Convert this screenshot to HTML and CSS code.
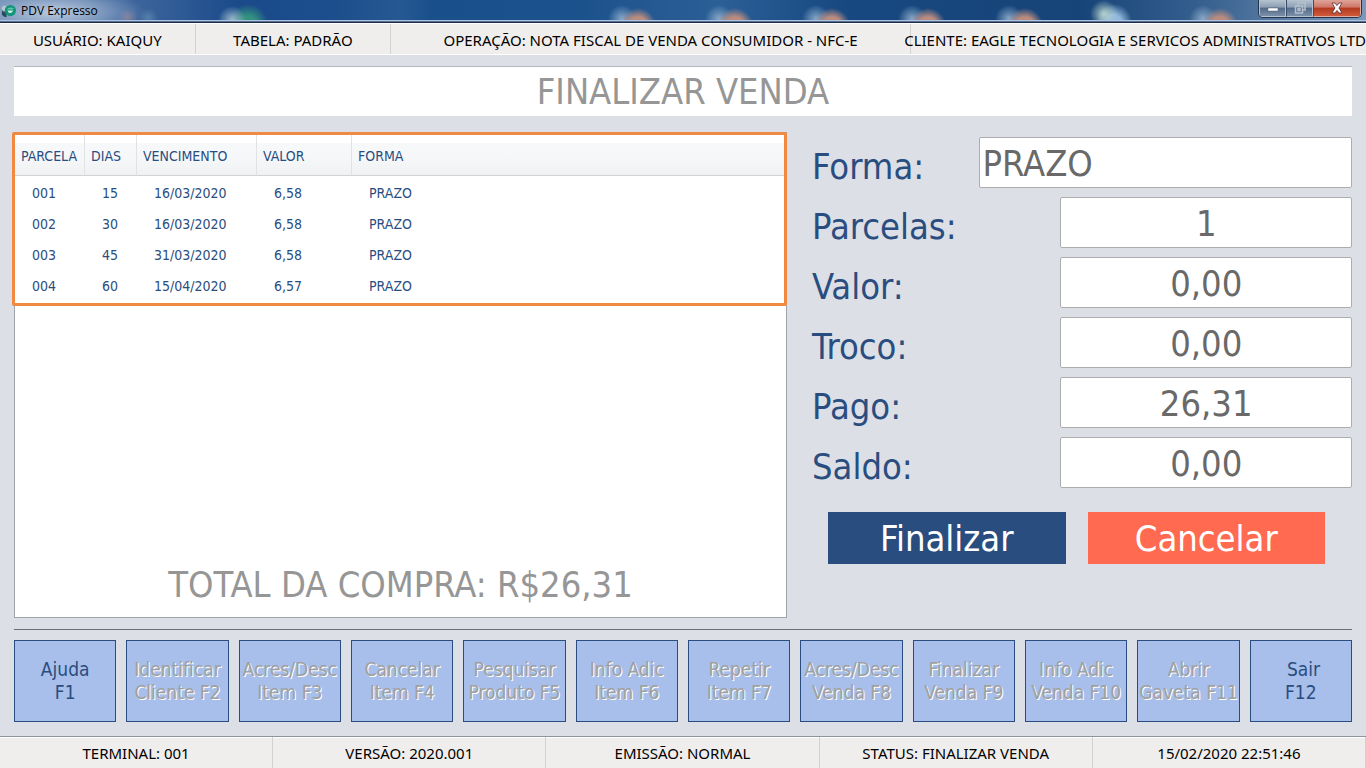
FILE: index.html
```html
<!DOCTYPE html>
<html lang="pt-BR">
<head>
    <meta charset="UTF-8">
    <title>PDV Expresso</title>
    <link rel="stylesheet" href="styles.css">
</head>
<body>

<header class="titlebar">
    <svg class="app-icon" viewBox="0 0 16 16" aria-hidden="true">
        <path d="M1 7 Q3 4 6 5 V15 Q2 15 1 12 Z" fill="#2c4a5c"/>
        <circle cx="4" cy="6" r="3" fill="#b8c8cf"/>
        <circle cx="10" cy="8" r="6" fill="#14947a"/>
        <path d="M6 7 Q9 3 14 6 L12 7 Z" fill="#5fc4a8"/>
        <path d="M7 8 H13 Q11 12 8 10 Z" fill="#c5efe2"/>
    </svg>
    <span class="app-name">PDV Expresso</span>
    <div class="window-buttons">
        <button class="win-btn" aria-label="Minimizar">
            <svg width="12" height="12" viewBox="0 0 12 12"><rect x="1" y="6" width="10" height="3" fill="#fff" stroke="#53606f" stroke-width=".5"/></svg>
        </button>
        <button class="win-btn" aria-label="Restaurar" disabled>
            <svg width="12" height="12" viewBox="0 0 12 12" fill="none" stroke="#b4c0cc" stroke-width="1.5"><path d="M4 3 V1 H11 V8 H9"/><rect x="1.5" y="4" width="7" height="7"/><rect x="4" y="6.5" width="2" height="2"/></svg>
        </button>
        <button class="win-btn win-close" aria-label="Fechar">
            <svg width="14" height="12" viewBox="0 0 14 12"><path d="M2 1 H5 L7 3.5 L9 1 H12 L9 6 L12 11 H9 L7 8.5 L5 11 H2 L5 6 Z" fill="#fff" stroke="#5b2c30" stroke-width=".8"/></svg>
        </button>
    </div>
</header>

<div class="statusbar statusbar-top">
    <div class="cell user">USUÁRIO: KAIQUY</div>
    <div class="cell price-table">TABELA: PADRÃO</div>
    <div class="cell operation">OPERAÇÃO: NOTA FISCAL DE VENDA CONSUMIDOR - NFC-E</div>
    <div class="cell client">CLIENTE: EAGLE TECNOLOGIA E SERVICOS ADMINISTRATIVOS LTD</div>
</div>

<main>
    <h1>FINALIZAR VENDA</h1>

    <div class="content">
        <section class="installments">
            <div class="table-box">
                <table>
                    <thead>
                        <tr>
                            <th class="col-parcela">PARCELA</th>
                            <th class="col-dias">DIAS</th>
                            <th class="col-vencimento">VENCIMENTO</th>
                            <th class="col-valor">VALOR</th>
                            <th>FORMA</th>
                        </tr>
                    </thead>
                    <tbody>
                        <tr><td>001</td><td>15</td><td>16/03/2020</td><td>6,58</td><td>PRAZO</td></tr>
                        <tr><td>002</td><td>30</td><td>16/03/2020</td><td>6,58</td><td>PRAZO</td></tr>
                        <tr><td>003</td><td>45</td><td>31/03/2020</td><td>6,58</td><td>PRAZO</td></tr>
                        <tr><td>004</td><td>60</td><td>15/04/2020</td><td>6,57</td><td>PRAZO</td></tr>
                    </tbody>
                </table>
            </div>
            <p class="total">TOTAL DA COMPRA: R$26,31</p>
        </section>

        <form class="payment">
            <div class="field field-wide">
                <label for="forma">Forma:</label>
                <input type="text" id="forma" value="PRAZO">
            </div>
            <div class="field">
                <label for="parcelas">Parcelas:</label>
                <input type="text" id="parcelas" value="1">
            </div>
            <div class="field">
                <label for="valor">Valor:</label>
                <input type="text" id="valor" value="0,00">
            </div>
            <div class="field">
                <label for="troco">Troco:</label>
                <input type="text" id="troco" value="0,00">
            </div>
            <div class="field">
                <label for="pago">Pago:</label>
                <input type="text" id="pago" value="26,31">
            </div>
            <div class="field">
                <label for="saldo">Saldo:</label>
                <input type="text" id="saldo" value="0,00">
            </div>
            <div class="actions">
                <button type="button" class="btn-finish">Finalizar</button>
                <button type="button" class="btn-cancel">Cancelar</button>
            </div>
        </form>
    </div>

    <nav class="shortcuts">
        <button>Ajuda<br>F1</button>
        <button disabled>Identificar<br>Cliente F2</button>
        <button disabled>Acres/Desc<br>Item F3</button>
        <button disabled>Cancelar<br>Item F4</button>
        <button disabled>Pesquisar<br>Produto F5</button>
        <button disabled>Info Adic<br>Item F6</button>
        <button disabled>Repetir<br>Item F7</button>
        <button disabled>Acres/Desc<br>Venda F8</button>
        <button disabled>Finalizar<br>Venda F9</button>
        <button disabled>Info Adic<br>Venda F10</button>
        <button disabled>Abrir<br>Gaveta F11</button>
        <button>&nbsp;Sair<br>F12</button>
    </nav>
</main>

<footer class="statusbar statusbar-bottom">
    <div class="cell">TERMINAL: 001</div>
    <div class="cell">VERSÃO: 2020.001</div>
    <div class="cell">EMISSÃO: NORMAL</div>
    <div class="cell">STATUS: FINALIZAR VENDA</div>
    <div class="cell">15/02/2020 22:51:46</div>
</footer>

</body>
</html>
```

FILE: styles.css
```css
* {
    box-sizing: border-box;
}
body {
    margin: 0;
    min-height: 100vh;
    display: flex;
    flex-direction: column;
    background: #dcdfe6;
    font-family: Tahoma, "DejaVu Sans Condensed", "DejaVu Sans", sans-serif;
    color: #2a4d7f;
    overflow-x: hidden;
}
button, input {
    font-family: inherit;
}

/* barra de titulo */
.titlebar {
    display: flex;
    align-items: center;
    height: 24px;
    padding: 0 4px 2px 1px;
    border-bottom: 1px solid #fff;
    box-shadow: inset 0 -1px #1c2c48, inset 0 -2px #5b7090, inset 0 -3px #a9c3e0;
    background:
        radial-gradient(ellipse 90px 24px at 55px 12px, rgba(205, 217, 232, 0.85), rgba(205, 217, 232, 0)),
        radial-gradient(circle 10px at 128px 18px, rgba(160, 130, 140, 0.6), transparent),
        radial-gradient(circle 10px at 148px 18px, rgba(100, 150, 180, 0.6), transparent),
        radial-gradient(circle 14px at 232px 20px, rgba(170, 195, 210, 0.9), transparent),
        radial-gradient(circle 20px at 248px 24px, #32917f 40%, transparent),
        radial-gradient(circle 18px at 638px 26px, #ba8c80 50%, transparent),
        radial-gradient(circle 14px at 622px 19px, #88a8c8, transparent),
        radial-gradient(circle 18px at 735px 26px, #ba8c80 50%, transparent),
        radial-gradient(circle 14px at 719px 19px, #88a8c8, transparent),
        radial-gradient(circle 18px at 832px 26px, #ba8c80 50%, transparent),
        radial-gradient(circle 14px at 816px 19px, #88a8c8, transparent),
        radial-gradient(circle 18px at 928px 26px, #ba8c80 50%, transparent),
        radial-gradient(circle 14px at 912px 19px, #88a8c8, transparent),
        radial-gradient(circle 18px at 1025px 26px, #ba8c80 50%, transparent),
        radial-gradient(circle 14px at 1009px 19px, #88a8c8, transparent),
        radial-gradient(circle 14px at 1104px 14px, #b4d0cc, transparent),
        radial-gradient(circle 18px at 1114px 22px, #8fb8dc 40%, transparent),
        radial-gradient(circle 18px at 1220px 26px, #ba8c80 50%, transparent),
        radial-gradient(circle 14px at 1203px 19px, #88a8c8, transparent),
        linear-gradient(90deg, #6484b0 0, #355f98 160px, #1a4a8a 240px, #1c4d8c 330px, #265992 400px, #19508c 430px, #1c528c 580px, #2b5f96 720px, #174880 850px, #174478 1080px, #355f8e 1200px, #7b99ba 100%);
}
.app-icon {
    width: 15px;
    height: 15px;
    margin-right: 5px;
}
.app-name {
    flex: 1;
    font-family: "Segoe UI", "Open Sans", sans-serif;
    font-size: 12px;
    line-height: 16px;
    color: #000;
}
.window-buttons {
    display: flex;
    align-self: flex-start;
    height: 18px;
    border: 1px solid #25344c;
    border-top: 0;
    border-radius: 0 0 5px 5px;
    overflow: hidden;
}
.win-btn {
    display: flex;
    align-items: center;
    justify-content: center;
    width: 27px;
    padding: 0;
    border: 1px solid #b3c2d2;
    border-top: 0;
    background: linear-gradient(#b6c3d0 0, #8c9eb3 45%, #51698a 50%, #7b90a8 100%);
}
.win-btn + .win-btn {
    border-left-color: #394d68;
}
.win-close {
    width: 48px;
    border-color: #e3aaa0;
    background: linear-gradient(#dfa499 0, #cf7666 45%, #b23a20 50%, #d05a3a 100%);
}

/* barras de status */
.statusbar {
    display: flex;
    background: #f0eeed;
    font-family: "Segoe UI", "Noto Sans", sans-serif;
    font-size: 15px;
    color: #000;
}
.cell {
    display: flex;
    flex: 1;
    min-width: 0;
    align-items: center;
    justify-content: center;
    white-space: nowrap;
    border-right: 1px solid #d2d2d2;
}
.statusbar-top {
    height: 31px;
    border-bottom: 1px solid #fff;
}
.statusbar-top .cell {
    padding-top: 2px;
}
.statusbar-top .user,
.statusbar-top .price-table {
    flex: 195;
}
.statusbar-top .operation {
    flex: 520;
}
.statusbar-top .client {
    flex: 456;
    justify-content: flex-end;
    border-right: 0;
}
.statusbar-bottom {
    height: 32px;
    border-top: 1px solid #8f949c;
    box-shadow: inset 0 1px #fff;
}

/* area principal */
main {
    flex: 1;
    display: flex;
    flex-direction: column;
    padding: 11px 14px 14px;
}
h1 {
    margin: 0 0 16px;
    height: 50px;
    line-height: 50px;
    border-top: 1px solid #b4b7bd;
    background: #fff;
    color: #969696;
    font-size: 36px;
    font-weight: normal;
    text-align: center;
}
.content {
    flex: 1;
    display: grid;
    grid-template-columns: 773fr 540fr;
    gap: 25px;
}

.installments {
    display: flex;
    flex-direction: column;
    justify-content: space-between;
    min-width: 0;
    border: 1px solid #a0a3a8;
    background: #fff;
}
.table-box {
    position: relative;
    padding-bottom: 3px;
}
.table-box::after {
    content: "";
    position: absolute;
    inset: -1px -1px -3px -3px;
    border: 3px solid #f08a42;
    border-radius: 2px;
    pointer-events: none;
}
table {
    width: 100%;
    table-layout: fixed;
    border-collapse: separate;
    border-spacing: 0;
    font-size: 14px;
    line-height: 16px;
}
th, td {
    text-align: left;
    font-weight: normal;
    white-space: nowrap;
}
th {
    height: 43px;
    padding: 4px 0 0 6px;
    border-right: 1px solid #e0e2e4;
    border-bottom: 1px solid #d0d2d4;
    background: linear-gradient(#fff 0, #fff 10px, #f6f8fa 10px, #f6f7f9 60%, #f0f1f3 100%);
}
th:last-child {
    border-right: 0;
}
td {
    height: 31px;
    padding: 2px 0 0 17px;
}
.col-parcela {
    width: 70px;
}
.col-dias {
    width: 52px;
}
.col-vencimento {
    width: 120px;
}
.col-valor {
    width: 95px;
}
.total {
    margin: 0 0 10px;
    color: #969696;
    font-size: 36px;
    line-height: 44px;
    text-align: center;
}

.payment {
    display: flex;
    flex-direction: column;
    gap: 9px;
    padding-top: 5px;
    min-width: 0;
}
.field {
    display: flex;
    justify-content: space-between;
}
.field label {
    padding-top: 8px;
    font-size: 36px;
    line-height: 43px;
}
.field input {
    width: 54%;
    height: 51px;
    padding: 2px 2px 0;
    border: 1px solid #adadad;
    border-radius: 2px;
    background: #fff;
    color: #696969;
    font-size: 36px;
    text-align: center;
}
.field-wide input {
    width: 69%;
    text-align: left;
}
.actions {
    display: flex;
    gap: 22px;
    padding: 15px 27px 0 16px;
}
.actions button {
    flex: 1;
    height: 52px;
    padding: 0;
    border: 0;
    color: #fff;
    font-size: 36px;
}
.btn-finish {
    background: #2a4d7f;
}
.btn-cancel {
    background: #ff6a50;
}

/* teclas de funcao */
.shortcuts {
    display: grid;
    grid-template-columns: repeat(12, minmax(0, 1fr));
    gap: 10px;
    margin-top: 11px;
    padding-top: 10px;
    border-top: 1px solid #6b6d70;
}
.shortcuts button {
    height: 82px;
    padding: 0;
    border: 1px solid #2a4d7f;
    background: #a7bfea;
    color: #2a4d7f;
    font-size: 19px;
    line-height: 23px;
    white-space: nowrap;
}
.shortcuts button:disabled {
    color: #a0a0a0;
    text-shadow: 1px 1px #fff;
}
```
